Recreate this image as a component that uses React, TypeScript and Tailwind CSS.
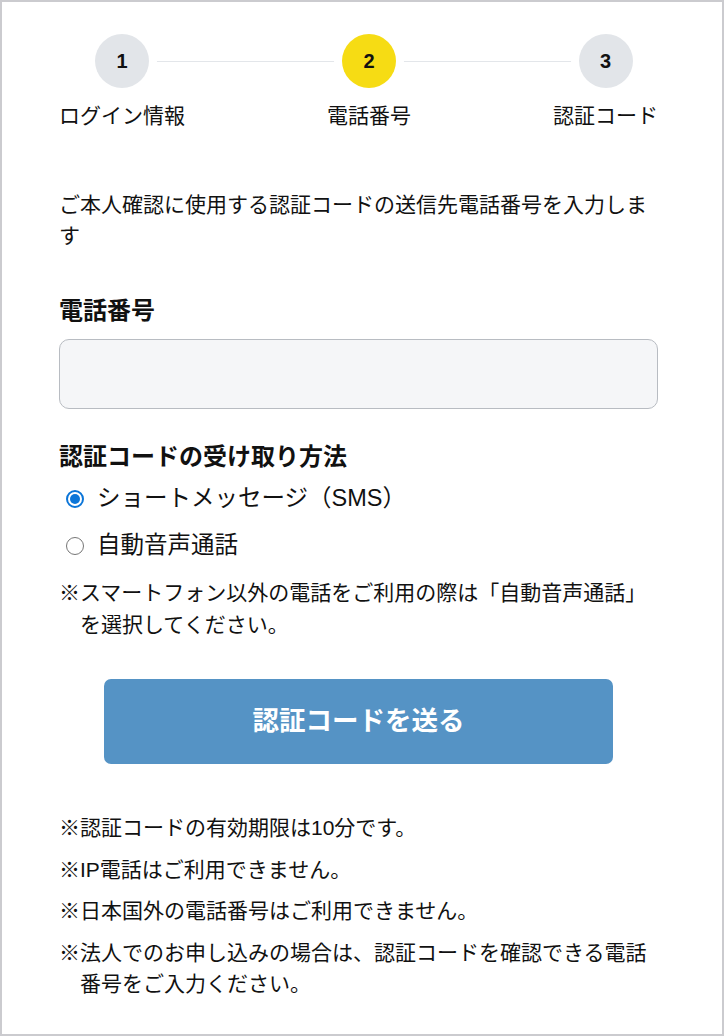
import React from "react";

const FONT = '"Liberation Sans", "Noto Sans CJK JP", sans-serif';

function Step({ n, label, active }: { n: number; label: string; active?: boolean }) {
  return (
    <div className="relative z-10 flex flex-col items-center">
      <div
        className={`flex h-[54px] w-[54px] items-center justify-center rounded-full text-[20px] font-bold text-[#111] ring-8 ring-white ${
          active ? "bg-[#f6dc14]" : "bg-[#e2e5e9]"
        }`}
      >
        {n}
      </div>
      <div className="mt-[12px] text-[21px] leading-[31px] text-[#111]">{label}</div>
    </div>
  );
}

function Radio({ checked, label }: { checked?: boolean; label: string }) {
  return (
    <label className="flex h-[47px] items-center pl-[7px]">
      {checked ? (
        <span className="flex h-[18px] w-[18px] items-center justify-center rounded-full border-2 border-[#0b75d8] bg-white">
          <span className="h-[10px] w-[10px] rounded-full bg-[#0b75d8]" />
        </span>
      ) : (
        <span className="h-[18px] w-[18px] rounded-full border-[1.5px] border-[#767676] bg-white" />
      )}
      <span className="ml-[13px] text-[23.5px] leading-[31px] text-[#111]">{label}</span>
    </label>
  );
}

function Note({ children, className = "" }: { children: React.ReactNode; className?: string }) {
  return (
    <p className={`pl-[21px] -indent-[21px] text-[21px] leading-[31px] text-[#111] ${className}`}>
      {children}
    </p>
  );
}

export default function App() {
  return (
    <div
      className="box-border h-[1036px] w-[724px] overflow-hidden border-2 border-[#cbcbcf] bg-white pl-[57px] pr-[64px] pt-[32px]"
      style={{ fontFamily: FONT }}
    >
      {/* Stepper */}
      <div className="relative flex justify-between">
        <div className="absolute left-[62px] right-[53px] top-[27px] h-px bg-[#e3e6ea]" />
        <Step n={1} label="ログイン情報" />
        <Step n={2} label="電話番号" active />
        <Step n={3} label="認証コード" />
      </div>

      <p className="mt-[58px] text-[21px] leading-[31px] text-[#111]">
        ご本人確認に使用する認証コードの送信先電話番号を入力します
      </p>

      <h2 className="mt-[42px] text-[24px] font-bold leading-[36px] text-[#111]">電話番号</h2>
      <input
        type="tel"
        className="mt-[10px] box-border block h-[70px] w-full rounded-[10px] border-[1.5px] border-[#b8bcc2] bg-[#f5f6f8] px-4 text-[21px] outline-none"
      />

      <h2 className="mt-[30px] text-[24px] font-bold leading-[36px] text-[#111]">
        認証コードの受け取り方法
      </h2>
      <div className="flex flex-col">
        <Radio checked label="ショートメッセージ（SMS）" />
        <Radio label="自動音声通話" />
      </div>

      <Note className="mt-[8px] leading-[32px]">
        ※スマートフォン以外の電話をご利用の際は「自動音声通話」を選択してください。
      </Note>

      <button className="mx-auto mt-[38px] flex h-[85px] w-[509px] items-center justify-center rounded-[7px] bg-[#5593c5] text-[26.5px] font-bold text-white">
        認証コードを送る
      </button>

      <div className="mt-[48px] flex flex-col gap-[10.5px]">
        <Note>※認証コードの有効期限は10分です。</Note>
        <Note>※IP電話はご利用できません。</Note>
        <Note>※日本国外の電話番号はご利用できません。</Note>
        <Note>※法人でのお申し込みの場合は、認証コードを確認できる電話番号をご入力ください。</Note>
      </div>
    </div>
  );
}
